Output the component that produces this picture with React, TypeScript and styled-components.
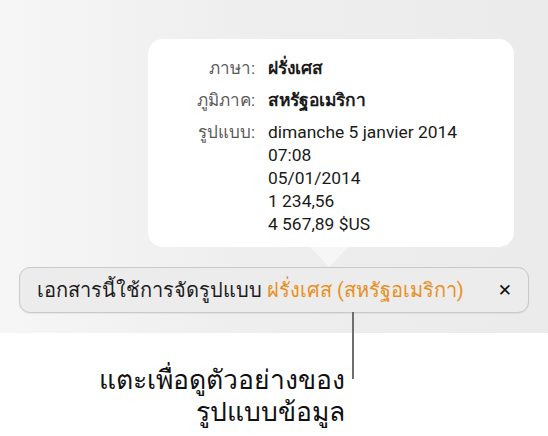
import styled, { createGlobalStyle } from 'styled-components';

const GlobalStyle = createGlobalStyle`
  html, body {
    margin: 0;
    padding: 0;
    background: #fff;
  }
  body {
    font-family: Roboto, "Noto Sans", "DejaVu Sans", sans-serif;
  }
`;

const Page = styled.div`
  width: 548px;
  height: 436px;
  overflow: hidden;
  display: flex;
  flex-direction: column;
`;

const Stage = styled.div`
  height: 333px;
  box-sizing: border-box;
  padding: 39px 19px 0 19px;
  background: linear-gradient(90deg, #f6f6f6 0%, #eeeeee 45%, #ebebeb 100%);
  display: flex;
  flex-direction: column;
`;

const Popover = styled.div`
  position: relative;
  align-self: flex-start;
  margin-left: 129px;
  width: 366px;
  height: 208px;
  box-sizing: border-box;
  background: #fff;
  border-radius: 15px;
  padding: 18px 0 0 0;
  display: grid;
  grid-template-columns: 107px 1fr;
  column-gap: 13px;
  row-gap: 9px;
  align-content: start;

  &::after {
    content: '';
    position: absolute;
    left: 162px;
    top: 100%;
    border-left: 19px solid transparent;
    border-right: 19px solid transparent;
    border-top: 20px solid #f6f6f6;
  }
`;

const Label = styled.div`
  text-align: right;
  color: #5a5a5a;
  font-size: 17px;
  line-height: 23px;
`;

const Value = styled.div<{ $bold?: boolean }>`
  color: #1a1a1a;
  font-size: 17.4px;
  line-height: 23px;
  font-weight: ${(p) => (p.$bold ? 700 : 400)};
`;

const Bar = styled.div`
  position: relative;
  margin-top: 20px;
  height: 46px;
  box-sizing: border-box;
  border: 1px solid #c9c9c9;
  border-radius: 11px;
  background: #ececec;
  box-shadow: 0 1px 1px rgba(0, 0, 0, 0.06);
  display: flex;
  align-items: center;
  padding: 0 16px 0 17px;
  font-size: 20px;
  color: #1c1c1c;
`;

const BarText = styled.span`
  flex: 1;
  white-space: nowrap;
`;

const Accent = styled.span`
  color: #e8901f;
`;

const Close = styled.span`
  font-size: 17px;
  font-weight: 900;
  color: #111;
`;

const Leader = styled.div`
  position: absolute;
  left: 332px;
  top: 100%;
  width: 2px;
  height: 67px;
  background: #6f6f6f;
`;

const Caption = styled.div`
  align-self: flex-start;
  width: 345px;
  margin-top: 31px;
  text-align: right;
  font-size: 26.5px;
  line-height: 32px;
  color: #111;
`;

export default function App() {
  return (
    <>
      <GlobalStyle />
      <Page>
        <Stage>
          <Popover>
            <Label>ภาษา:</Label>
            <Value $bold>ฝรั่งเศส</Value>
            <Label>ภูมิภาค:</Label>
            <Value $bold>สหรัฐอเมริกา</Value>
            <Label>รูปแบบ:</Label>
            <Value>
              dimanche 5 janvier 2014
              <br />
              07:08
              <br />
              05/01/2014
              <br />
              1 234,56
              <br />
              4 567,89 $US
            </Value>
          </Popover>
          <Bar>
            <BarText>
              เอกสารนี้ใช้การจัดรูปแบบ <Accent>ฝรั่งเศส (สหรัฐอเมริกา)</Accent>
            </BarText>
            <Close>✕</Close>
            <Leader />
          </Bar>
        </Stage>
        <Caption>
          แตะเพื่อดูตัวอย่างของ
          <br />
          รูปแบบข้อมูล
        </Caption>
      </Page>
    </>
  );
}
